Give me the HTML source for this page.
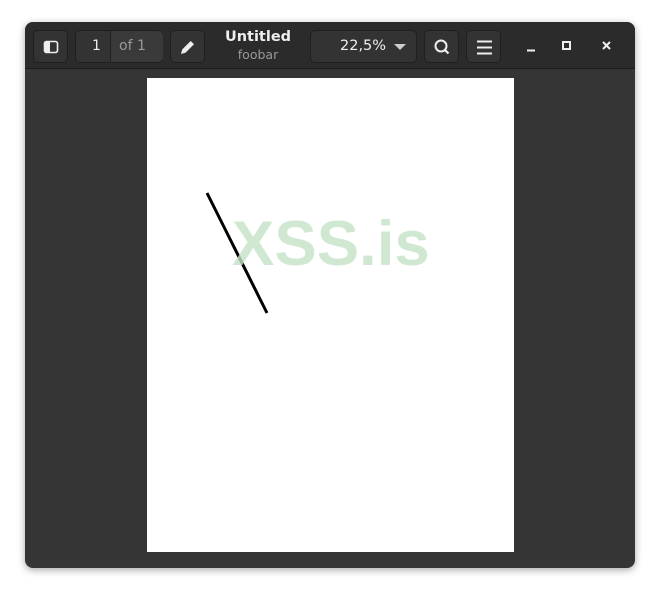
<!DOCTYPE html>
<html><head><style>
*{margin:0;padding:0;box-sizing:border-box}
body{width:660px;height:596px;background:#fff;position:relative;font-family:"DejaVu Sans","Liberation Sans",sans-serif;overflow:hidden}
.win{position:absolute;left:25px;top:22px;width:610px;height:546px;background:#353535;border-radius:8px;overflow:hidden;box-shadow:0 2px 8px rgba(0,0,0,.35)}
.hdr{position:absolute;left:0;top:0;width:610px;height:47px;background:#2b2b2b;border-bottom:1px solid #1c1c1c}
.btn{position:absolute;top:8px;height:33px;background:#333;border:1px solid #1f1f1f;border-radius:5px}
.t{position:absolute;color:#eee;font-size:14px}
.page{position:absolute;left:122px;top:56px;width:367px;height:474px;background:#fff}
</style></head><body>
<div class="win">
<div class="hdr">
 <div class="btn" style="left:8px;width:35px"><svg width="35" height="33"><rect x="10.5" y="10.5" width="13" height="11" rx="2" fill="none" stroke="#eee" stroke-width="1.6"/><rect x="11" y="11" width="5" height="10" fill="#eee"/></svg></div>
 <div class="btn" style="left:50px;width:88px"><div style="position:absolute;left:34px;top:0;width:1px;height:31px;background:#1f1f1f"></div><div style="position:absolute;left:35px;top:0;width:52px;height:31px;background:#3a3a3a;border-radius:0 5px 5px 0"></div>
  <span class="t" style="left:16px;top:7px">1</span><span class="t" style="left:43px;top:7px;color:#999">of 1</span></div>
 <div class="btn" style="left:145px;width:35px"><svg width="35" height="33"><path d="M10 23l1.2-4.5 8.5-8.5 3.3 3.3-8.5 8.5z" fill="#eee"/></svg></div>
 <div style="position:absolute;left:183px;top:7px;width:100px;text-align:center;color:#eee;font-weight:bold;font-size:14.5px">Untitled</div>
 <div style="position:absolute;left:183px;top:25px;width:100px;text-align:center;color:#999;font-size:12.5px">foobar</div>
 <div class="btn" style="left:285px;width:107px"><span class="t" style="left:29px;top:7px;font-size:14.5px">22,5%</span><svg style="position:absolute;left:83px;top:12px" width="12" height="8"><path d="M0 1h12L6 7z" fill="#ccc"/></svg></div>
 <div class="btn" style="left:399px;width:35px"><svg width="35" height="33"><circle cx="16" cy="15" r="5.5" fill="none" stroke="#eee" stroke-width="2"/><path d="M20 19l3.5 3.5" stroke="#eee" stroke-width="2.2"/></svg></div>
 <div class="btn" style="left:441px;width:35px"><svg width="35" height="33"><path d="M10 10.5h15M10 16.5h15M10 22.5h15" stroke="#eee" stroke-width="2"/></svg></div>
 <svg style="position:absolute;left:495px;top:12px" width="100" height="24"><path d="M7 16.5h8" stroke="#eee" stroke-width="2"/><rect x="43" y="8" width="7" height="7" fill="none" stroke="#eee" stroke-width="2"/><path d="M83 8l7 7M90 8l-7 7" stroke="#eee" stroke-width="2"/></svg>
</div>
<div class="page">
 <svg width="367" height="474" style="position:absolute;left:0;top:0"><path d="M60 115L120 235" stroke="#000" stroke-width="3"/>
 <text x="85" y="187" font-family="Liberation Sans" font-weight="bold" font-size="63.5" fill="#c4e2c5" fill-opacity="0.8">XSS.is</text></svg>
</div>
</div>
</body></html>
